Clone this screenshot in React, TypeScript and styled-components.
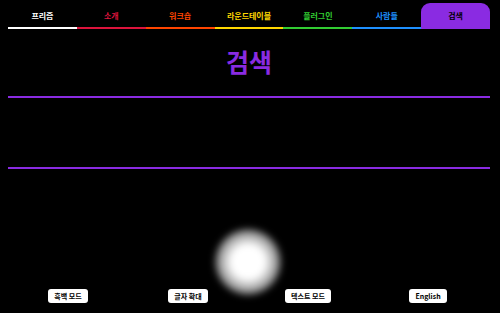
import React from 'react'
import styled, { createGlobalStyle } from 'styled-components'

const GlobalStyle = createGlobalStyle`
    html, body {
        margin: 0;
        padding: 0;
        background: #000;
        font-family: "Noto Sans CJK KR", "Noto Sans", sans-serif;
    }
`

const Page = styled.div`
    position: relative;
    width: 500px;
    height: 313px;
    padding: 3px 10px 0 8px;
    box-sizing: border-box;
    overflow: hidden;
`

const Nav = styled.nav`
    display: grid;
    grid-template-columns: repeat(7, 1fr);
`

const Tab = styled.a<{ $color: string; $active?: boolean }>`
    display: flex;
    align-items: center;
    justify-content: center;
    height: 26px;
    box-sizing: border-box;
    border-bottom: 2px solid ${p => p.$color};
    border-radius: ${p => (p.$active ? '9px 9px 0 0' : '0')};
    background: ${p => (p.$active ? p.$color : 'transparent')};
    color: ${p => (p.$active ? '#000' : p.$color)};
    font-size: 8px;
    font-weight: 700;
    padding-top: 1px;
`

const Title = styled.h1`
    margin: 0;
    height: 67px;
    display: flex;
    align-items: center;
    justify-content: center;
    color: #8a2be2;
    font-size: 25px;
    font-weight: 700;
    padding-bottom: 3px;
    box-sizing: border-box;
`

const Rule = styled.div`
    height: 2px;
    background: #8a2be2;
`

const Results = styled.div`
    height: 69px;
`

const Footer = styled.div`
    display: grid;
    grid-template-columns: repeat(4, 1fr);
    justify-items: center;
    margin-top: 120px;
    padding-right: 2px;
`

const ModeButton = styled.button`
    height: 14px;
    padding: 0 6px;
    border: none;
    border-radius: 3px;
    background: #fff;
    color: #000;
    font-family: "Noto Sans CJK KR", "Noto Sans", sans-serif;
    font-size: 7px;
    font-weight: 700;
    line-height: 14px;
`

const Glow = styled.div`
    position: absolute;
    left: 213px;
    top: 227px;
    width: 70px;
    height: 70px;
    border-radius: 50%;
    background: radial-gradient(circle, #fff 0%, #fff 32%, rgba(255,255,255,0.6) 58%, rgba(255,255,255,0) 72%);
    filter: blur(3px);
    pointer-events: none;
`

const tabs = [
    { label: '프리즘', color: '#ffffff' },
    { label: '소개', color: '#dc143c' },
    { label: '워크숍', color: '#ff4500' },
    { label: '라운드테이블', color: '#ffd700' },
    { label: '플러그인', color: '#32cd32' },
    { label: '사람들', color: '#1e90ff' },
    { label: '검색', color: '#8a2be2', active: true },
]

export default function App() {
    return (
        <>
            <GlobalStyle />
            <Page>
                <Nav>
                    {tabs.map(t => (
                        <Tab key={t.label} $color={t.color} $active={t.active}>{t.label}</Tab>
                    ))}
                </Nav>
                <Title>검색</Title>
                <Rule />
                <Results />
                <Rule />
                <Footer>
                    <ModeButton>흑백 모드</ModeButton>
                    <ModeButton>글자 확대</ModeButton>
                    <ModeButton>텍스트 모드</ModeButton>
                    <ModeButton>English</ModeButton>
                </Footer>
                <Glow />
            </Page>
        </>
    )
}
